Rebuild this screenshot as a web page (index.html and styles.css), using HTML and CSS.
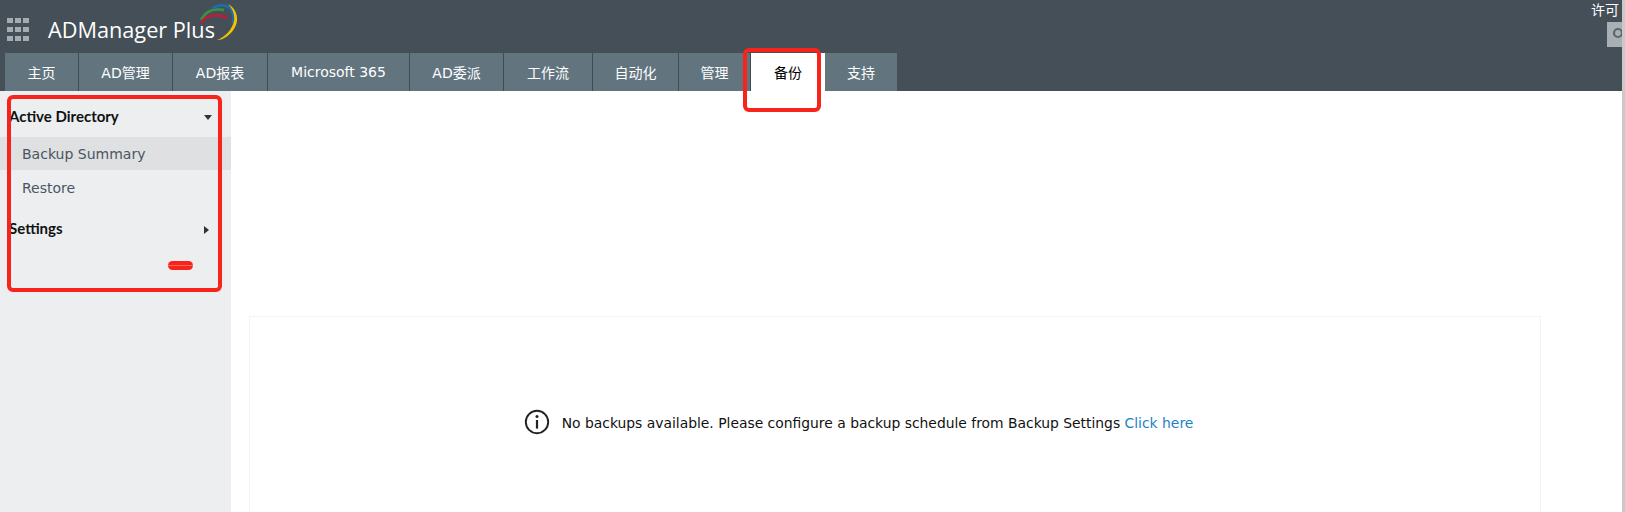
FILE: index.html
```html
<!DOCTYPE html>
<html lang="zh">
<head>
<meta charset="utf-8">
<title>ADManager Plus</title>
<link rel="stylesheet" href="styles.css">
</head>
<body>
<div class="page">
  <header class="header">
    <div class="topbar">
      <div class="apps"><i></i><i></i><i></i><i></i><i></i><i></i><i></i><i></i><i></i></div>
      <div class="logo">
        <span class="logo-text">ADManager Plus</span>
        <svg class="logo-arc" width="40" height="38" viewBox="0 0 40 38">
          <path d="M2 17C6 9 14 5 25 7" fill="none" stroke="#3c8f45" stroke-width="2.8"/>
          <path d="M14 5C20 1 29 1 33 8C35 12 35 16 34 20" fill="none" stroke="#1f6cae" stroke-width="2.8"/>
          <path d="M2 20C7 12 19 10 28 15" fill="none" stroke="#b3213f" stroke-width="3"/>
          <path d="M29 1C38 6 41 17 35 26C31 32 25 37 18 37C26 34 33 27 35 18C36 12 34 6 29 1Z" fill="#f2c200"/>
        </svg>
      </div>
      <div class="top-right">
        <span class="license">许可</span>
        <div class="search">
          <svg width="15" height="25" viewBox="0 0 15 25"><circle cx="11" cy="11" r="4" fill="none" stroke="#5f666b" stroke-width="2.2"/></svg>
        </div>
      </div>
    </div>
    <nav class="tabs">
      <a class="tab w1">主页</a>
      <a class="tab w2">AD管理</a>
      <a class="tab w3">AD报表</a>
      <a class="tab w4">Microsoft 365</a>
      <a class="tab w5">AD委派</a>
      <a class="tab w6">工作流</a>
      <a class="tab w7">自动化</a>
      <a class="tab w8">管理</a>
      <a class="tab w9 active">备份</a>
      <a class="tab w10 last">支持</a>
    </nav>
  </header>
  <div class="body">
    <aside class="sidebar">
      <div class="group-head head-first"><span>Active Directory</span><b class="caret-down"></b></div>
      <div class="item selected">Backup Summary</div>
      <div class="item">Restore</div>
      <div class="group-head head-second"><span>Settings</span><b class="caret-right"></b></div>
    </aside>
    <main class="content">
      <section class="card">
        <svg class="info" width="26" height="26" viewBox="0 0 26 26">
          <circle cx="13" cy="13" r="11.2" fill="none" stroke="#222" stroke-width="1.9"/>
          <circle cx="13" cy="7.6" r="1.5" fill="#222"/>
          <rect x="11.9" y="11" width="2.2" height="8.6" fill="#222"/>
        </svg>
        <p class="msg">No backups available. Please configure a backup schedule from Backup Settings <a class="link">Click here</a></p>
      </section>
    </main>
  </div>
  <div class="mark mark-tab"></div>
  <div class="mark mark-side"></div>
  <div class="mark-dash"></div>
</div>
</body>
</html>
```
FILE: styles.css
```css
html, body { margin: 0; padding: 0; height: 100%; overflow: hidden; background: #fff; }
.page { position: relative; width: 1625px; height: 512px; border-right: 3px solid #c9c9c9; box-sizing: border-box; display: flex; flex-direction: column; overflow: hidden; font-family: "DejaVu Sans", "Noto Sans CJK SC", sans-serif; }
.header { height: 91px; background: #444f57; display: flex; flex-direction: column; flex: none; }
.topbar { height: 53px; display: flex; align-items: flex-start; }
.apps { display: grid; grid-template-columns: repeat(3, 6px); grid-auto-rows: 5px; column-gap: 2px; row-gap: 4px; margin: 18px 0 0 7px; }
.apps i { background: #a6abaf; display: block; }
.logo { display: flex; align-items: flex-start; margin-left: 19px; }
.logo-text { font-family: "Open Sans", sans-serif; font-size: 21.7px; line-height: 26px; color: #fff; margin-top: 17px; white-space: nowrap; }
.logo-arc { margin: 3px 0 0 -16px; }
.top-right { margin-left: auto; display: flex; flex-direction: column; align-items: flex-end; }
.license { font-size: 14px; line-height: 18px; color: #fff; margin: 0 3px 4px 0; font-family: "Noto Sans CJK SC", sans-serif; }
.search { width: 15px; height: 25px; background: #a9b0b5; overflow: hidden; }
.tabs { display: flex; height: 38px; padding-left: 5px; }
.tab { box-sizing: border-box; display: flex; align-items: center; justify-content: center; background: #62757f; color: #fff; font-size: 14px; border-right: 1px solid #3f4c54; height: 38px; }
.tab.active { background: #fff; color: #000; border-right: 0; }
.tab.last { border-right: 0; }
.w1 { width: 74px; } .w2 { width: 94px; } .w3 { width: 95px; } .w4 { width: 142px; } .w5 { width: 94px; }
.w6 { width: 89px; } .w7 { width: 86px; } .w8 { width: 72px; } .w9 { width: 74px; } .w10 { width: 72px; }
.body { flex: 1; display: flex; min-height: 0; }
.sidebar { width: 231px; flex: none; background: #eceef0; }
.group-head { display: flex; justify-content: space-between; align-items: center; font-family: Lato, sans-serif; font-weight: 700; font-size: 15px; color: #111; padding: 0 19px 0 9px; height: 24px; }
.head-first { margin-top: 13px; margin-bottom: 9px; }
.head-second { margin-top: 11px; padding-right: 22px; }
.caret-down { width: 0; height: 0; margin-top: 2px; border-left: 4.5px solid transparent; border-right: 4.5px solid transparent; border-top: 5px solid #333; }
.caret-right { width: 0; height: 0; margin-top: 4px; border-top: 4.5px solid transparent; border-bottom: 4.5px solid transparent; border-left: 5px solid #333; }
.item { height: 34px; line-height: 34px; padding-left: 22px; font-size: 14px; color: #4a5560; }
.item.selected { background: #dfe0e2; height: 33px; margin-bottom: 1px; }
.content { flex: 1; min-width: 0; padding: 225px 81px 0 18px; }
.card { height: 221px; box-sizing: border-box; border: 1px solid #f3f3f3; display: flex; align-items: flex-start; justify-content: center; padding: 92px 73px 0 0; gap: 12px; }
.info { flex: none; }
.msg { margin: 5px 0 0; font-size: 13.88px; line-height: 18px; color: #111; white-space: nowrap; }
.link { color: #1b82c5; }
.mark { position: absolute; box-sizing: border-box; border: 4px solid #f8231a; border-radius: 6px; }
.mark-tab { left: 743px; top: 48px; width: 78px; height: 64px; }
.mark-side { left: 7px; top: 95px; width: 215px; height: 197px; }
.mark-dash { position: absolute; left: 168px; top: 261px; width: 25px; height: 9px; border-radius: 5px; background: linear-gradient(#f8231a 44%, #fa6a62 44%, #fa6a62 56%, #f8231a 56%); }
```
